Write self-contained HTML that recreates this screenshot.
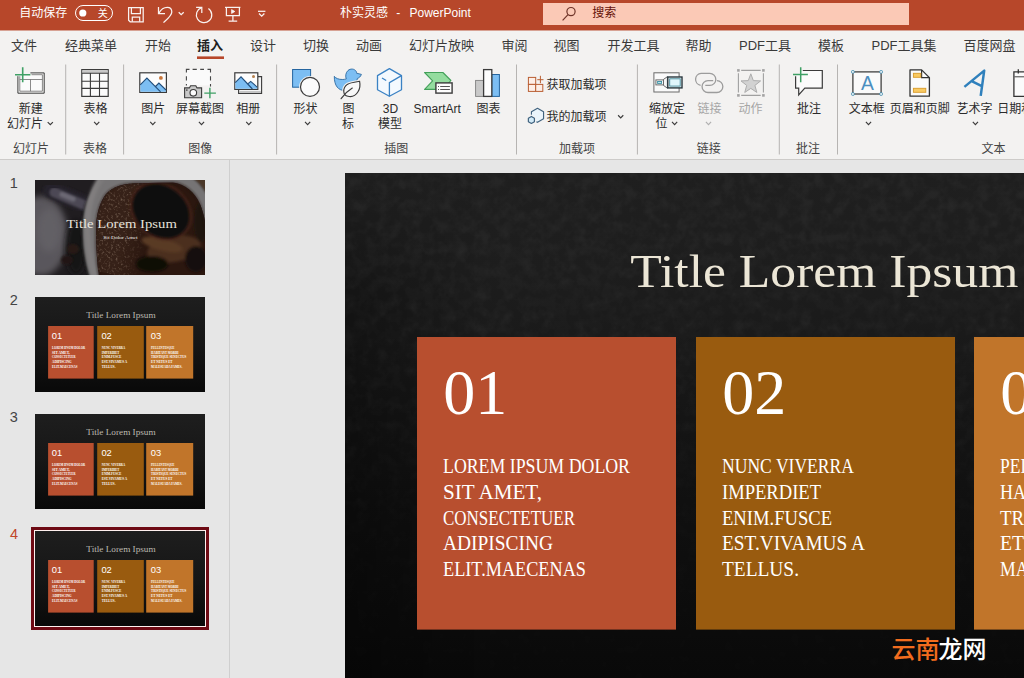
<!DOCTYPE html>
<html lang="zh-CN"><head><meta charset="utf-8"><title>PowerPoint</title>
<style>
html,body{margin:0;padding:0;background:#e6e6e6;font-family:"Liberation Sans",sans-serif;overflow:hidden}
#app{position:relative;width:1024px;height:678px;overflow:hidden;background:#e6e6e6}
#app>div{position:absolute;left:0;width:1024px;overflow:hidden}
#titlebar{top:0;height:30px;background:#b7472a}
#tabs{top:30px;height:30px;background:#f3f2f1;box-shadow:inset 0 1px 0 #d7a294}
#ribbon{top:60px;height:100px;background:#f3f2f1;box-shadow:inset 0 -1px 0 #cdcbc9}
#work{top:160px;height:518px;background:#e6e6e6}
#app svg{display:block;overflow:hidden}
#app svg text{font-family:"Liberation Sans","Noto Sans CJK SC",sans-serif}
#app svg text.sf{font-family:"Liberation Serif","Noto Serif CJK SC",serif}
#app svg text.sb{font-family:"Liberation Serif","Noto Serif CJK SC",serif;font-weight:bold}
</style></head><body>
<div id="app">
<div id="titlebar"><svg class="" style="position:absolute;left:0;top:0" width="1024" height="30" viewBox="0 0 1024 30"><text x="19.2" y="17.2" font-size="12" fill="#fff">自动保存</text><rect x="75.5" y="5.5" width="37" height="15" rx="7.5" fill="none" stroke="#fff" stroke-width="1"/><circle cx="82.8" cy="13" r="3.6" fill="#fff"/><text x="97.8" y="16.55" font-size="10" fill="#fff">关</text><g fill="none" stroke="#fff" stroke-width="1.25" opacity="0.93"><path d="M128.6 7.6 H143.2 V21.8 H130.2 L128.6 20.2 Z"/><path d="M131.4 7.6 V13.7 H140.4 V7.6"/><path d="M132.3 21.8 V17 H139.7 V21.8"/><path d="M158.5 7 V13.5 H165"/><path d="M158.9 13.1 C160.6 10 163.6 7.3 167.3 7.3 C170.2 7.3 171.8 9.4 171.8 12 C171.8 15.5 168 18.5 163.5 22.6"/><path d="M178.7 12.2 l2.5 2.5 l2.5 -2.5"/><path d="M196.1 7.3 H201.8 V12.9"/><path d="M201.5 7.7 A7.7 7.7 0 1 0 208.4 8.6"/><path d="M225 7.4 H240.4"/><path d="M226.4 7.4 V15.6 H239.4 V7.4"/><path d="M232.9 15.6 V21 M228.6 21.2 H237.2"/><path d="M231.6 9.6 V13.4 L234.8 11.5 Z" stroke-width="0.8" fill="#fff"/><path d="M258 11.3 H265.4"/><path d="M259 13.5 l2.7 2.7 l2.7 -2.7"/></g><text x="340" y="17.4" font-size="12" fill="#fff">朴实灵感</text><text x="396.3" y="17.4" font-size="12" fill="#fff">-</text><text x="409.5" y="17.4" font-size="12" fill="#fff">PowerPoint</text><rect x="543" y="3" width="366" height="22" fill="#fbc9b6"/><g fill="none" stroke="#6e3328" stroke-width="1.2"><circle cx="571" cy="11.6" r="4.1"/><path d="M568 14.7 L562.6 20.4"/></g><text x="592.2" y="17.3" font-size="12" fill="#651208">搜索</text></svg></div>
<div id="tabs"><svg class="" style="position:absolute;left:0;top:0" width="1024" height="30" viewBox="0 30 1024 30"><text x="11" y="50.08" font-size="13" fill="#3a3a3a">文件</text><text x="65" y="50.08" font-size="13" fill="#3a3a3a">经典菜单</text><text x="145" y="50.08" font-size="13" fill="#3a3a3a">开始</text><text x="197" y="50.08" font-size="13" font-weight="bold" fill="#1f1f1f">插入</text><rect x="197" y="56.4" width="27" height="2.6" fill="#b7472a"/><text x="250" y="50.08" font-size="13" fill="#3a3a3a">设计</text><text x="303" y="50.08" font-size="13" fill="#3a3a3a">切换</text><text x="356" y="50.08" font-size="13" fill="#3a3a3a">动画</text><text x="409" y="50.08" font-size="13" fill="#3a3a3a">幻灯片放映</text><text x="501.5" y="50.08" font-size="13" fill="#3a3a3a">审阅</text><text x="553.5" y="50.08" font-size="13" fill="#3a3a3a">视图</text><text x="607.5" y="50.08" font-size="13" fill="#3a3a3a">开发工具</text><text x="685.5" y="50.08" font-size="13" fill="#3a3a3a">帮助</text><text x="739" y="50.08" font-size="13" fill="#3a3a3a">PDF工具</text><text x="818" y="50.08" font-size="13" fill="#3a3a3a">模板</text><text x="871.5" y="50.08" font-size="13" fill="#3a3a3a">PDF工具集</text><text x="963.5" y="50.08" font-size="13" fill="#3a3a3a">百度网盘</text></svg></div>
<div id="ribbon"><svg class="" style="position:absolute;left:0;top:0" width="1024" height="100" viewBox="0 60 1024 100"><rect x="65.2" y="64.5" width="1" height="90" fill="#b6b4b2"/><rect x="123.1" y="64.5" width="1" height="90" fill="#b6b4b2"/><rect x="276.1" y="64.5" width="1" height="90" fill="#b6b4b2"/><rect x="516" y="64.5" width="1" height="90" fill="#b6b4b2"/><rect x="636.9" y="64.5" width="1" height="90" fill="#b6b4b2"/><rect x="778.8" y="64.5" width="1" height="90" fill="#b6b4b2"/><rect x="837" y="64.5" width="1" height="90" fill="#b6b4b2"/><text x="13" y="153.1" font-size="12" fill="#444">幻灯片</text><text x="83" y="153.1" font-size="12" fill="#444">表格</text><text x="188.3" y="153.1" font-size="12" fill="#444">图像</text><text x="384.2" y="153.1" font-size="12" fill="#444">插图</text><text x="559" y="153.1" font-size="12" fill="#444">加载项</text><text x="696.7" y="153.1" font-size="12" fill="#444">链接</text><text x="796" y="153.1" font-size="12" fill="#444">批注</text><text x="981.5" y="153.1" font-size="12" fill="#444">文本</text><text x="18.7" y="113.1" font-size="12" fill="#2b2b2b">新建</text><text x="7" y="128.1" font-size="12" fill="#2b2b2b">幻灯片</text><path d="M47.7 122.05 l2.6 2.7 l2.6 -2.7" fill="none" stroke="#3b3b3b" stroke-width="1.15"/><text x="83.6" y="113.1" font-size="12" fill="#2b2b2b">表格</text><path d="M94.1 121.85 l2.6 2.7 l2.6 -2.7" fill="none" stroke="#3b3b3b" stroke-width="1.15"/><text x="141.3" y="113.1" font-size="12" fill="#2b2b2b">图片</text><path d="M150.2 121.85 l2.6 2.7 l2.6 -2.7" fill="none" stroke="#3b3b3b" stroke-width="1.15"/><text x="176" y="113.1" font-size="12" fill="#2b2b2b">屏幕截图</text><path d="M198.9 121.85 l2.6 2.7 l2.6 -2.7" fill="none" stroke="#3b3b3b" stroke-width="1.15"/><text x="236.2" y="113.1" font-size="12" fill="#2b2b2b">相册</text><path d="M246.2 121.85 l2.6 2.7 l2.6 -2.7" fill="none" stroke="#3b3b3b" stroke-width="1.15"/><text x="293.5" y="113.1" font-size="12" fill="#2b2b2b">形状</text><path d="M305 121.85 l2.6 2.7 l2.6 -2.7" fill="none" stroke="#3b3b3b" stroke-width="1.15"/><text x="342.4" y="113.1" font-size="12" fill="#2b2b2b">图</text><text x="342" y="128.1" font-size="12" fill="#2b2b2b">标</text><text x="382.84" y="113.1" font-size="12" fill="#2b2b2b">3D</text><text x="378" y="128.1" font-size="12" fill="#2b2b2b">模型</text><text x="413.5" y="113.1" font-size="12" fill="#2b2b2b">SmartArt</text><text x="476.6" y="113.1" font-size="12" fill="#2b2b2b">图表</text><text x="546.6" y="89.2" font-size="12" fill="#2b2b2b">获取加载项</text><text x="546.6" y="121.3" font-size="12" fill="#2b2b2b">我的加载项</text><path d="M618.1 115.25 l2.6 2.7 l2.6 -2.7" fill="none" stroke="#3b3b3b" stroke-width="1.15"/><text x="649" y="113.1" font-size="12" fill="#2b2b2b">缩放定</text><text x="655.4" y="128.1" font-size="12" fill="#2b2b2b">位</text><path d="M672 121.85 l2.6 2.7 l2.6 -2.7" fill="none" stroke="#3b3b3b" stroke-width="1.15"/><text x="697.4" y="113.1" font-size="12" fill="#a6a6a6">链接</text><path d="M705.9 121.85 l2.6 2.7 l2.6 -2.7" fill="none" stroke="#b0b0b0" stroke-width="1.15"/><text x="738.5" y="113.1" font-size="12" fill="#a6a6a6">动作</text><text x="797" y="113.1" font-size="12" fill="#2b2b2b">批注</text><text x="848.8" y="113.1" font-size="12" fill="#2b2b2b">文本框</text><path d="M865.9 121.85 l2.6 2.7 l2.6 -2.7" fill="none" stroke="#3b3b3b" stroke-width="1.15"/><text x="889.7" y="113.1" font-size="12" fill="#2b2b2b">页眉和页脚</text><text x="956.6" y="113.1" font-size="12" fill="#2b2b2b">艺术字</text><path d="M972.8 121.85 l2.6 2.7 l2.6 -2.7" fill="none" stroke="#3b3b3b" stroke-width="1.15"/><text x="997.2" y="113.1" font-size="12" fill="#2b2b2b">日期和</text><rect x="19.7" y="74.6" width="22.7" height="16.6" fill="#fbfbfb"/><path d="M30.4 72.9 H44.2 V93.2 H17.9 V76.2" fill="none" stroke="#333" stroke-width="0.95"/><path d="M31.5 74.7 H42.4 V91.2 H19.8 V76.2 M19.8 79.5 H42.4 M30.5 79.5 V91.2" fill="none" stroke="#666" stroke-width="0.75"/><path d="M15 74.7 H30.4 M22.7 67.3 V82.3" stroke="#3fa065" stroke-width="1.6" fill="none"/><rect x="81.8" y="69.6" width="26.4" height="26.8" fill="#fbfbfb" stroke="#3b3b3b" stroke-width="1.2"/><rect x="82.4" y="70.2" width="25.2" height="3" fill="#c8c8c8"/><path d="M81.8 73.3 H108.2 M81.8 81.3 H108.2 M81.8 88.4 H108.2 M90.4 73.3 V96.4 M99.5 73.3 V96.4" stroke="#3b3b3b" stroke-width="1.1" fill="none"/><rect x="139.8" y="72.8" width="26.6" height="19.6" fill="#fdfdfd" stroke="#3b3b3b" stroke-width="1.2"/><path d="M140.4 84.6 L146.9 78 L155.5 86.5 L158.9 83 L165.8 89.8 V91.8 H140.4 Z" fill="#7cbef3"/><path d="M140.2 84.8 L146.9 78 L160.6 91.8 M155.5 86.5 L158.9 83 L166 90" fill="none" stroke="#234e7a" stroke-width="1.1"/><circle cx="160.9" cy="77.9" r="1.9" fill="#c8763a"/><rect x="186.4" y="69.4" width="24.2" height="16" fill="#fafafa"/><path d="M186.4 72.6 V69.4 H189.5 M192.6 69.4 H196.8 M200.2 69.4 H204 M207.5 69.4 H210.5 V72.6 M186.4 76.3 V80.5 M186.4 84.1 V85.6 M210.5 76.3 V80.5 M210.5 84.1 V86.6" fill="none" stroke="#474747" stroke-width="1.1"/><path d="M184.6 87.9 H189.4 L190.6 85.7 H195.8 L197 87.9 H201.6 V97.8 H184.6 Z" fill="#c8c8c8" stroke="#3b3b3b" stroke-width="1.1"/><circle cx="193.3" cy="92.8" r="3.3" fill="#fcfcfc" stroke="#3b3b3b" stroke-width="1.1"/><rect x="186.1" y="89.4" width="1.4" height="1.4" fill="#3b3b3b"/><path d="M204.3 93.1 H215.9 M209.9 87.7 V98.2" stroke="#3fa065" stroke-width="1.4" fill="none"/><path d="M258 76.6 H261.6 V93.4 H238.6 V90" fill="#f4f4f4" stroke="#3b3b3b" stroke-width="1.1"/><rect x="239.2" y="91" width="21.6" height="1.5" fill="#c4c4c4"/><rect x="234.8" y="72.8" width="23" height="16.6" fill="#fdfdfd" stroke="#3b3b3b" stroke-width="1.2"/><path d="M235.4 82.4 L241 76.8 L248.1 83.7 L250.7 81.4 L257.2 87.2 V88.8 H235.4 Z" fill="#7cbef3"/><path d="M235.2 82.6 L241 76.8 L252.4 89 M248.1 83.7 L250.7 81.4 L257.4 87.3" fill="none" stroke="#234e7a" stroke-width="1.1"/><circle cx="253.5" cy="76.5" r="1.5" fill="#b5804e"/><rect x="292.6" y="69.5" width="18" height="17.7" fill="#7cbef3" stroke="#25659f" stroke-width="1"/><circle cx="310" cy="86.9" r="10.9" fill="#f3f2f1"/><circle cx="310" cy="86.9" r="9.5" fill="#fbfbfb" stroke="#3b3b3b" stroke-width="1.2"/><path d="M334.3 76.3 C335.5 78.2 338.5 79.6 342.8 79.5 C344.2 79.4 345.4 79.2 346.3 78.9 C345.2 76.6 345.6 72.6 348 70.5 C350.6 68.3 354.6 68.6 356.3 71.6 C356.6 72.2 356.6 72.8 356.5 73.2 L361.4 74.4 C360.6 76.6 359 78 357.4 78.4 C356.6 83 353 90.6 345 90.6 C338.5 90.6 334.2 86 334.3 76.3 Z" fill="#7cbef3" stroke="#2d6aa0" stroke-width="0.9" stroke-linejoin="round"/><path d="M359.6 81.3 C355 82 350 82.6 347.3 84.4 C344.8 86.2 343.6 89 343.8 91.7 C344 94.2 345.6 95.8 347.9 96.3 C351.8 97.2 355.8 95.4 358 91.8 C359.8 88.8 360.4 85 359.6 81.3 Z" fill="#f3f2f1" stroke="#f3f2f1" stroke-width="3.2"/><path d="M341.1 98.7 C344 94.6 347.5 91 352.3 88.1" fill="none" stroke="#f3f2f1" stroke-width="3"/><path d="M359.6 81.3 C355 82 350 82.6 347.3 84.4 C344.8 86.2 343.6 89 343.8 91.7 C344 94.2 345.6 95.8 347.9 96.3 C351.8 97.2 355.8 95.4 358 91.8 C359.8 88.8 360.4 85 359.6 81.3 Z" fill="#f8f8f8" stroke="#3b3b3b" stroke-width="1.15"/><path d="M341.1 98.7 C344 94.6 347.5 91 352.3 88.1" fill="none" stroke="#3b3b3b" stroke-width="1.15" stroke-linecap="round"/><path d="M389.4 68.6 L401.5 75.6 V89.7 L389.4 96.3 L377.5 89.7 V75.6 Z" fill="#f4f9fe" stroke="#3b82c4" stroke-width="1.3" stroke-linejoin="round"/><path d="M401.5 75.6 L389.4 82.6 V96.3 M386.2 80.5 L382 78" fill="none" stroke="#3b82c4" stroke-width="1.3"/><path d="M424.6 72.5 H442.9 L450.9 80.5 L442.9 89.4 H424.6 L432.6 80.9 Z" fill="#94dc9f" stroke="#43a05a" stroke-width="1.1" stroke-linejoin="round"/><rect x="435.9" y="82.9" width="16.2" height="10.2" fill="#fdfdfd" stroke="#3b3b3b" stroke-width="1.4"/><path d="M440.2 86.5 H449.9 M440.2 89.5 H449.9" stroke="#555" stroke-width="1" fill="none"/><rect x="438" y="86" width="1" height="1" fill="#555"/><rect x="438" y="89" width="1" height="1" fill="#555"/><rect x="475.6" y="80.4" width="8" height="16" fill="#c9c9c9" stroke="#808080" stroke-width="0.9"/><rect x="491.8" y="74.5" width="7.6" height="21.9" fill="#7cbef3" stroke="#25659f" stroke-width="1"/><rect x="483.6" y="69.6" width="8.2" height="26.8" fill="#fdfdfd" stroke="#3b3b3b" stroke-width="1.3"/><g fill="#fdeee6" stroke="#b95e32" stroke-width="1"><rect x="528.4" y="77.4" width="7.3" height="7"/><rect x="528.4" y="84.4" width="7.3" height="7"/><rect x="535.7" y="84.4" width="7.1" height="7"/><path d="M537.3 79.7 H543.5 M540.4 75.8 V83.2" fill="none"/></g><polygon points="537.5,108.35 543.56,111.85 543.56,118.85 537.5,122.35 531.44,118.85 531.44,111.85" fill="#ebf5fb"/><path d="M531.44 114.85 L531.44 111.85 L537.5 108.35 L543.56 111.85 L543.56 118.85 L537.5 122.35 L536.4 121.7" fill="none" stroke="#41637f" stroke-width="1.15" stroke-linejoin="round"/><polygon points="531.4,116.45 534.43,118.2 534.43,121.7 531.4,123.45 528.37,121.7 528.37,118.2" fill="#f3f2f1" stroke="#f3f2f1" stroke-width="3"/><polygon points="531.4,116.45 534.43,118.2 534.43,121.7 531.4,123.45 528.37,121.7 528.37,118.2" fill="#d3ebf8" stroke="#41637f" stroke-width="1.2" stroke-linejoin="round"/><rect x="653.9" y="72.8" width="25.2" height="19.2" fill="#fafafa" stroke="#6a6a6a" stroke-width="1"/><path d="M663.5 79.4 L667.4 76.7 V88.2 L663.5 85.4 Z" fill="#f7f7f7" stroke="#6a6a6a" stroke-width="1"/><rect x="655.9" y="79.9" width="7.6" height="5" fill="#fdfdfd" stroke="#6a6a6a" stroke-width="1"/><rect x="657.6" y="81.5" width="4" height="1.9" fill="#c4e8f0" stroke="#3b8ea0" stroke-width="0.9"/><rect x="667.8" y="77" width="14.2" height="10.9" fill="#fdfdfd" stroke="#26363d" stroke-width="1.4"/><rect x="669.7" y="78.8" width="10.5" height="7.3" fill="#e0f6fb" stroke="#3f8798" stroke-width="0.9"/><g fill="none" stroke="#9c9c9c" stroke-width="1.3"><path d="M700.6 85.3 A6 6 0 0 1 701.1 73.4 H709.8 A6 6 0 0 1 709.8 85.4 H705.3"/><path d="M713.2 80.6 H708 A5.95 5.95 0 0 0 708 92.5 H716.9 A5.95 5.95 0 0 0 716.9 80.6"/></g><path d="M741.2 70.4 H760.7 M741.2 95.4 H760.7 M738.4 73.3 V92.5 M763.4 73.3 V92.5" fill="none" stroke="#a0a0a0" stroke-width="1.1"/><rect x="737.1" y="69.1" width="2.6" height="2.6" fill="#a3a3a3"/><rect x="762.1" y="69.1" width="2.6" height="2.6" fill="#a3a3a3"/><rect x="737.1" y="94.1" width="2.6" height="2.6" fill="#a3a3a3"/><rect x="762.1" y="94.1" width="2.6" height="2.6" fill="#a3a3a3"/><polygon points="750.8,73.8 753.33,80.62 760.6,80.92 754.89,85.43 756.85,92.43 750.8,88.4 744.75,92.43 746.71,85.43 741,80.92 748.27,80.62" fill="#d2d2d2" stroke="#adadad" stroke-width="1" stroke-linejoin="round"/><path d="M802.8 70.5 H822.3 V88.2 H804.8 L798.7 94.9 V88.2 H795.6 V76.2" fill="#fbfbfb" stroke="#3b3b3b" stroke-width="1.2"/><path d="M793 74.6 H807.9 M800.7 67.3 V82.2" stroke="#3fa065" stroke-width="1.5" fill="none"/><rect x="852.9" y="71.9" width="28.2" height="22.1" fill="#fafafa" stroke="#333" stroke-width="1.2"/><rect x="851.6" y="70.6" width="2.6" height="2.6" rx="0.7" fill="#fff" stroke="#3b87aa" stroke-width="0.9"/><rect x="879.8" y="70.6" width="2.6" height="2.6" rx="0.7" fill="#fff" stroke="#3b87aa" stroke-width="0.9"/><rect x="851.6" y="92.7" width="2.6" height="2.6" rx="0.7" fill="#fff" stroke="#3b87aa" stroke-width="0.9"/><rect x="879.8" y="92.7" width="2.6" height="2.6" rx="0.7" fill="#fff" stroke="#3b87aa" stroke-width="0.9"/><text x="860.89" y="89.8" font-size="19.3" fill="#4b8fc0">A</text><path d="M910 69.9 H921.6 L929.4 77.6 V96.2 H910 Z" fill="#fbfbfb" stroke="#333" stroke-width="1.3" stroke-linejoin="round"/><path d="M921.6 69.9 V77.6 H929.4" fill="none" stroke="#333" stroke-width="1.2"/><rect x="913.4" y="73.3" width="7.4" height="4" fill="#f9ca62" stroke="#d99b2a" stroke-width="0.9"/><rect x="913.4" y="88.3" width="12.4" height="4" fill="#f9ca62" stroke="#d99b2a" stroke-width="0.9"/><path d="M964.4 86.9 L984.2 70.6 L980.7 95.9 M971.7 81.2 L981.8 86.2" fill="none" stroke="#2f80bc" stroke-width="2.5" stroke-linejoin="round"/><path d="M1030 71.8 H1013.9 V96.3 H1030" fill="#fbfbfb" stroke="#333" stroke-width="1.3"/><path d="M1018.3 69.2 V73.6" stroke="#333" stroke-width="1.3"/><path d="M1014.4 76.8 H1030" stroke="#444" stroke-width="1"/></svg></div>
<div id="work"><svg class="" style="position:absolute;left:0;top:0" width="1024" height="518" viewBox="0 160 1024 518"><g id="thumbs"><defs><linearGradient id="tbg" x1="0" y1="0" x2="0" y2="1"><stop offset="0" stop-color="#1e1e1e"/><stop offset="0.5" stop-color="#161616"/><stop offset="1" stop-color="#090909"/></linearGradient></defs><text x="9.8" y="188.04" font-size="14.5" fill="#444">1</text><text x="9.8" y="304.94" font-size="14.5" fill="#444">2</text><text x="9.8" y="421.94" font-size="14.5" fill="#444">3</text><text x="9.9" y="538.74" font-size="14.5" fill="#c0452a">4</text><defs><clipPath id="cclip"><rect x="0" y="0" width="170" height="95"/></clipPath><clipPath id="cupclip"><path d="M61 50 C61 38 63 27 69 17 C74 8.5 84 4 100 3.2 L138 2.6 C150 4 160 12 165 24 C169 34 171 44 171.5 56 L172 100 L64.5 100 C62 85 61 65 61 50 Z"/></clipPath><filter id="b3" x="-30%" y="-30%" width="160%" height="160%"><feGaussianBlur stdDeviation="3"/></filter><filter id="b2" x="-30%" y="-30%" width="160%" height="160%"><feGaussianBlur stdDeviation="1.8"/></filter><filter id="b1" x="-30%" y="-30%" width="160%" height="160%"><feGaussianBlur stdDeviation="0.8"/></filter><filter id="foam" x="0" y="0" width="100%" height="100%"><feTurbulence type="fractalNoise" baseFrequency="0.42" numOctaves="2" seed="3"/><feColorMatrix type="matrix" values="0 0 0 0 0.47  0 0 0 0 0.33  0 0 0 0 0.24  1.7 0 0 0 -0.9"/><feGaussianBlur stdDeviation="0.35"/></filter><linearGradient id="foamfade" x1="0" y1="0" x2="1" y2="0"><stop offset="0" stop-color="#fff"/><stop offset="0.55" stop-color="#fff"/><stop offset="0.95" stop-color="#000"/></linearGradient><mask id="foammask"><rect x="55" y="0" width="62" height="95" fill="url(#foamfade)" transform="rotate(12 86 48)"/></mask></defs><g transform="translate(35 180)" clip-path="url(#cclip)"><rect width="170" height="95" fill="#242024"/><ellipse cx="6" cy="56" rx="27" ry="40" fill="#6e6a71" filter="url(#b3)"/><ellipse cx="14" cy="50" rx="12" ry="22" fill="#79767d" filter="url(#b3)"/><ellipse cx="41" cy="68" rx="10" ry="27" fill="#171214" filter="url(#b3)"/><ellipse cx="38" cy="69" rx="6" ry="5" fill="#2e1c16" filter="url(#b1)"/><ellipse cx="32" cy="80" rx="6" ry="4.5" fill="#281813" filter="url(#b1)"/><path d="M17 10.5 L54 26" stroke="#2a2630" stroke-width="17" stroke-linecap="round" fill="none" filter="url(#b2)"/><g filter="url(#b1)"><path d="M19.5 12.5 L54 27" stroke="#5d5967" stroke-width="10" stroke-linecap="round" fill="none"/><path d="M27 14.5 L38 19" stroke="#858190" stroke-width="5" stroke-linecap="round" fill="none"/></g><rect x="150" y="0" width="20" height="16" fill="#5c4330"/><path d="M47.8 50 C47.8 36 51 22 57 12 C61 5 66 -2 72 -6 L150 -6 C160 -2 166 5 173 16 L173 100 L56 100 C50.5 85 47.8 68 47.8 50 Z" fill="#191517" filter="url(#b2)" transform="translate(-1.2 0)"/><path d="M47.8 50 C47.8 36 51 22 57 12 C61 5 66 -2 72 -6 L150 -6 C160 -2 166 5 173 16 L173 100 L56 100 C50.5 85 47.8 68 47.8 50 Z" fill="#939091" filter="url(#b1)"/><path d="M66 -2 C56 12 52 32 52.5 52 C53 70 56 84 60 98" fill="none" stroke="#a09d9e" stroke-width="6" filter="url(#b2)"/><g clip-path="url(#cupclip)"><rect x="55" y="0" width="120" height="100" fill="#33190f"/><g mask="url(#foammask)"><rect x="50" y="-10" width="80" height="115" fill="#41261a"/><rect x="50" y="-10" width="80" height="115" filter="url(#foam)"/></g><g filter="url(#b2)"><ellipse cx="139" cy="69" rx="27" ry="13" fill="#5c3822" transform="rotate(-10 139 69)"/><ellipse cx="127" cy="64.5" rx="21" ry="6" fill="#6e462a" transform="rotate(14 127 64.5)"/><ellipse cx="161" cy="79" rx="11" ry="13" fill="#170d09"/><ellipse cx="166" cy="42" rx="7" ry="20" fill="#22120c"/><ellipse cx="117" cy="84" rx="16" ry="8" fill="#0f0806"/><ellipse cx="126" cy="31" rx="33" ry="27" fill="#53281a" transform="rotate(38 126 31)"/></g><ellipse cx="126" cy="31" rx="30.5" ry="24.5" fill="#0d0807" transform="rotate(38 126 31)" filter="url(#b1)"/></g><path d="M61 50 C61 38 63 27 69 17 C74 8.5 84 4 100 3.2 L138 2.6 C150 4 160 12 165 24 C169 34 171 44 171.5 56 L172 100 L64.5 100 C62 85 61 65 61 50 Z" fill="none" stroke="#2a1a14" stroke-width="1.6" opacity="0.7" filter="url(#b1)"/><rect width="170" height="95" fill="#141014" opacity="0.22"/></g><text class="sf" x="66.35" y="228.3" font-size="13" fill="#e6e2da" textLength="110.5" lengthAdjust="spacingAndGlyphs">Title Lorem Ipsum</text><text class="sf" x="103.25" y="239.4" font-size="4.9" fill="#f2f0ec" textLength="34.3" lengthAdjust="spacingAndGlyphs">Sit Dolor Amet</text><rect x="35" y="297" width="170" height="95" fill="url(#tbg)"/><text class="sf" x="86.36" y="318.36" font-size="8.15" fill="#bbb9b0" textLength="69.28" lengthAdjust="spacingAndGlyphs">Title Lorem Ipsum</text><rect x="48.1" y="326" width="45.6" height="52.6" fill="#b84f2f"/><text x="51.7" y="338.7" font-size="9.4" fill="#fff">01</text><rect x="97.2" y="326" width="46.6" height="52.6" fill="#995b0f"/><text x="101.4" y="338.7" font-size="9.4" fill="#fff">02</text><rect x="146.2" y="326" width="47" height="52.6" fill="#c1752a"/><text x="150.7" y="338.7" font-size="9.4" fill="#fff">03</text><text class="sb" x="52.1" y="348.96" font-size="3.9" fill="#fff" textLength="33.15" lengthAdjust="spacingAndGlyphs">LOREM IPSUM DOLOR</text><text class="sb" x="52.1" y="353.71" font-size="3.9" fill="#fff" textLength="17.55" lengthAdjust="spacingAndGlyphs">SIT AMET,</text><text class="sb" x="52.1" y="358.46" font-size="3.9" fill="#fff" textLength="23.4" lengthAdjust="spacingAndGlyphs">CONSECTETUER</text><text class="sb" x="52.1" y="363.21" font-size="3.9" fill="#fff" textLength="19.5" lengthAdjust="spacingAndGlyphs">ADIPISCING</text><text class="sb" x="52.1" y="367.96" font-size="3.9" fill="#fff" textLength="25.35" lengthAdjust="spacingAndGlyphs">ELIT.MAECENAS</text><text class="sb" x="101.8" y="348.96" font-size="3.9" fill="#fff" textLength="23.4" lengthAdjust="spacingAndGlyphs">NUNC VIVERRA</text><text class="sb" x="101.8" y="353.71" font-size="3.9" fill="#fff" textLength="17.55" lengthAdjust="spacingAndGlyphs">IMPERDIET</text><text class="sb" x="101.8" y="358.46" font-size="3.9" fill="#fff" textLength="19.5" lengthAdjust="spacingAndGlyphs">ENIM.FUSCE</text><text class="sb" x="101.8" y="363.21" font-size="3.9" fill="#fff" textLength="25.35" lengthAdjust="spacingAndGlyphs">EST.VIVAMUS A</text><text class="sb" x="101.8" y="367.96" font-size="3.9" fill="#fff" textLength="13.65" lengthAdjust="spacingAndGlyphs">TELLUS.</text><text class="sb" x="151.1" y="348.96" font-size="3.9" fill="#fff" textLength="23.4" lengthAdjust="spacingAndGlyphs">PELLENTESQUE</text><text class="sb" x="151.1" y="353.71" font-size="3.9" fill="#fff" textLength="27.3" lengthAdjust="spacingAndGlyphs">HABITANT MORBI</text><text class="sb" x="151.1" y="358.46" font-size="3.9" fill="#fff" textLength="35.1" lengthAdjust="spacingAndGlyphs">TRISTIQUE SENECTUS</text><text class="sb" x="151.1" y="363.21" font-size="3.9" fill="#fff" textLength="21.45" lengthAdjust="spacingAndGlyphs">ET NETUS ET</text><text class="sb" x="151.1" y="367.96" font-size="3.9" fill="#fff" textLength="31.2" lengthAdjust="spacingAndGlyphs">MALESUADA FAMES.</text><rect x="35" y="414" width="170" height="95" fill="url(#tbg)"/><text class="sf" x="86.36" y="435.36" font-size="8.15" fill="#bbb9b0" textLength="69.28" lengthAdjust="spacingAndGlyphs">Title Lorem Ipsum</text><rect x="48.1" y="443" width="45.6" height="52.6" fill="#b84f2f"/><text x="51.7" y="455.7" font-size="9.4" fill="#fff">01</text><rect x="97.2" y="443" width="46.6" height="52.6" fill="#995b0f"/><text x="101.4" y="455.7" font-size="9.4" fill="#fff">02</text><rect x="146.2" y="443" width="47" height="52.6" fill="#c1752a"/><text x="150.7" y="455.7" font-size="9.4" fill="#fff">03</text><text class="sb" x="52.1" y="465.96" font-size="3.9" fill="#fff" textLength="33.15" lengthAdjust="spacingAndGlyphs">LOREM IPSUM DOLOR</text><text class="sb" x="52.1" y="470.71" font-size="3.9" fill="#fff" textLength="17.55" lengthAdjust="spacingAndGlyphs">SIT AMET,</text><text class="sb" x="52.1" y="475.46" font-size="3.9" fill="#fff" textLength="23.4" lengthAdjust="spacingAndGlyphs">CONSECTETUER</text><text class="sb" x="52.1" y="480.21" font-size="3.9" fill="#fff" textLength="19.5" lengthAdjust="spacingAndGlyphs">ADIPISCING</text><text class="sb" x="52.1" y="484.96" font-size="3.9" fill="#fff" textLength="25.35" lengthAdjust="spacingAndGlyphs">ELIT.MAECENAS</text><text class="sb" x="101.8" y="465.96" font-size="3.9" fill="#fff" textLength="23.4" lengthAdjust="spacingAndGlyphs">NUNC VIVERRA</text><text class="sb" x="101.8" y="470.71" font-size="3.9" fill="#fff" textLength="17.55" lengthAdjust="spacingAndGlyphs">IMPERDIET</text><text class="sb" x="101.8" y="475.46" font-size="3.9" fill="#fff" textLength="19.5" lengthAdjust="spacingAndGlyphs">ENIM.FUSCE</text><text class="sb" x="101.8" y="480.21" font-size="3.9" fill="#fff" textLength="25.35" lengthAdjust="spacingAndGlyphs">EST.VIVAMUS A</text><text class="sb" x="101.8" y="484.96" font-size="3.9" fill="#fff" textLength="13.65" lengthAdjust="spacingAndGlyphs">TELLUS.</text><text class="sb" x="151.1" y="465.96" font-size="3.9" fill="#fff" textLength="23.4" lengthAdjust="spacingAndGlyphs">PELLENTESQUE</text><text class="sb" x="151.1" y="470.71" font-size="3.9" fill="#fff" textLength="27.3" lengthAdjust="spacingAndGlyphs">HABITANT MORBI</text><text class="sb" x="151.1" y="475.46" font-size="3.9" fill="#fff" textLength="35.1" lengthAdjust="spacingAndGlyphs">TRISTIQUE SENECTUS</text><text class="sb" x="151.1" y="480.21" font-size="3.9" fill="#fff" textLength="21.45" lengthAdjust="spacingAndGlyphs">ET NETUS ET</text><text class="sb" x="151.1" y="484.96" font-size="3.9" fill="#fff" textLength="31.2" lengthAdjust="spacingAndGlyphs">MALESUADA FAMES.</text><rect x="32.5" y="528.5" width="175" height="100" fill="#fff0ee" stroke="#6e0a14" stroke-width="3"/><rect x="35" y="531" width="170" height="95" fill="url(#tbg)"/><text class="sf" x="86.36" y="552.36" font-size="8.15" fill="#bbb9b0" textLength="69.28" lengthAdjust="spacingAndGlyphs">Title Lorem Ipsum</text><rect x="48.1" y="560" width="45.6" height="52.6" fill="#b84f2f"/><text x="51.7" y="572.7" font-size="9.4" fill="#fff">01</text><rect x="97.2" y="560" width="46.6" height="52.6" fill="#995b0f"/><text x="101.4" y="572.7" font-size="9.4" fill="#fff">02</text><rect x="146.2" y="560" width="47" height="52.6" fill="#c1752a"/><text x="150.7" y="572.7" font-size="9.4" fill="#fff">03</text><text class="sb" x="52.1" y="582.96" font-size="3.9" fill="#fff" textLength="33.15" lengthAdjust="spacingAndGlyphs">LOREM IPSUM DOLOR</text><text class="sb" x="52.1" y="587.71" font-size="3.9" fill="#fff" textLength="17.55" lengthAdjust="spacingAndGlyphs">SIT AMET,</text><text class="sb" x="52.1" y="592.46" font-size="3.9" fill="#fff" textLength="23.4" lengthAdjust="spacingAndGlyphs">CONSECTETUER</text><text class="sb" x="52.1" y="597.21" font-size="3.9" fill="#fff" textLength="19.5" lengthAdjust="spacingAndGlyphs">ADIPISCING</text><text class="sb" x="52.1" y="601.96" font-size="3.9" fill="#fff" textLength="25.35" lengthAdjust="spacingAndGlyphs">ELIT.MAECENAS</text><text class="sb" x="101.8" y="582.96" font-size="3.9" fill="#fff" textLength="23.4" lengthAdjust="spacingAndGlyphs">NUNC VIVERRA</text><text class="sb" x="101.8" y="587.71" font-size="3.9" fill="#fff" textLength="17.55" lengthAdjust="spacingAndGlyphs">IMPERDIET</text><text class="sb" x="101.8" y="592.46" font-size="3.9" fill="#fff" textLength="19.5" lengthAdjust="spacingAndGlyphs">ENIM.FUSCE</text><text class="sb" x="101.8" y="597.21" font-size="3.9" fill="#fff" textLength="25.35" lengthAdjust="spacingAndGlyphs">EST.VIVAMUS A</text><text class="sb" x="101.8" y="601.96" font-size="3.9" fill="#fff" textLength="13.65" lengthAdjust="spacingAndGlyphs">TELLUS.</text><text class="sb" x="151.1" y="582.96" font-size="3.9" fill="#fff" textLength="23.4" lengthAdjust="spacingAndGlyphs">PELLENTESQUE</text><text class="sb" x="151.1" y="587.71" font-size="3.9" fill="#fff" textLength="27.3" lengthAdjust="spacingAndGlyphs">HABITANT MORBI</text><text class="sb" x="151.1" y="592.46" font-size="3.9" fill="#fff" textLength="35.1" lengthAdjust="spacingAndGlyphs">TRISTIQUE SENECTUS</text><text class="sb" x="151.1" y="597.21" font-size="3.9" fill="#fff" textLength="21.45" lengthAdjust="spacingAndGlyphs">ET NETUS ET</text><text class="sb" x="151.1" y="601.96" font-size="3.9" fill="#fff" textLength="31.2" lengthAdjust="spacingAndGlyphs">MALESUADA FAMES.</text><rect x="229" y="160" width="1" height="518" fill="#cfcfcf"/></g><g id="slide"><defs><filter id="noise" x="0" y="0" width="100%" height="100%"><feTurbulence type="fractalNoise" baseFrequency="0.09" numOctaves="3" seed="7"/><feColorMatrix type="matrix" values="0 0 0 0 1  0 0 0 0 1  0 0 0 0 1  0.045 0.045 0.045 0 -0.055"/></filter><linearGradient id="sbg" x1="0" y1="0" x2="0" y2="1"><stop offset="0" stop-color="#1f1f1f"/><stop offset="0.2" stop-color="#1d1d1d"/><stop offset="0.32" stop-color="#1a1a1a"/><stop offset="0.45" stop-color="#161616"/><stop offset="0.65" stop-color="#101010"/><stop offset="0.865" stop-color="#0c0c0c"/><stop offset="1" stop-color="#090909"/></linearGradient><linearGradient id="svig" x1="0" y1="0" x2="1" y2="0"><stop offset="0" stop-color="#000" stop-opacity="0.28"/><stop offset="1" stop-color="#000" stop-opacity="0"/></linearGradient><linearGradient id="svig2" x1="0" y1="0" x2="0" y2="1"><stop offset="0" stop-color="#fff" stop-opacity="0"/><stop offset="0.25" stop-color="#fff" stop-opacity="1"/></linearGradient><linearGradient id="nmg" x1="0" y1="0" x2="0" y2="1"><stop offset="0" stop-color="#fff"/><stop offset="0.3" stop-color="#ddd"/><stop offset="0.75" stop-color="#555"/><stop offset="1" stop-color="#333"/></linearGradient><mask id="nm"><rect x="345" y="173" width="679" height="505" fill="url(#nmg)"/></mask><mask id="svm"><rect x="345" y="173" width="140" height="505" fill="url(#svig2)"/></mask></defs><rect x="345" y="173" width="679" height="505" fill="url(#sbg)"/><rect x="345" y="173" width="130" height="505" fill="url(#svig)" mask="url(#svm)"/><g mask="url(#nm)"><rect x="345" y="173" width="679" height="505" filter="url(#noise)"/></g><text class="sf" x="630.3" y="286.6" font-size="45.65" fill="#ece6d6" textLength="388.03" lengthAdjust="spacingAndGlyphs">Title Lorem Ipsum</text><rect x="417" y="337" width="259" height="292.6" fill="#b84f2f"/><text class="sf" x="443.3" y="414.2" font-size="64" fill="#fff" textLength="64" lengthAdjust="spacingAndGlyphs">01</text><text class="sf" x="443" y="473" font-size="22" fill="#fff" textLength="187" lengthAdjust="spacingAndGlyphs">LOREM IPSUM DOLOR</text><text class="sf" x="443" y="498.78" font-size="22" fill="#fff" textLength="99" lengthAdjust="spacingAndGlyphs">SIT AMET,</text><text class="sf" x="443" y="524.56" font-size="22" fill="#fff" textLength="132" lengthAdjust="spacingAndGlyphs">CONSECTETUER</text><text class="sf" x="443" y="550.34" font-size="22" fill="#fff" textLength="110" lengthAdjust="spacingAndGlyphs">ADIPISCING</text><text class="sf" x="443" y="576.12" font-size="22" fill="#fff" textLength="143" lengthAdjust="spacingAndGlyphs">ELIT.MAECENAS</text><rect x="696" y="337" width="259" height="292.6" fill="#995b0f"/><text class="sf" x="722.3" y="414.2" font-size="64" fill="#fff" textLength="64" lengthAdjust="spacingAndGlyphs">02</text><text class="sf" x="722" y="473" font-size="22" fill="#fff" textLength="132" lengthAdjust="spacingAndGlyphs">NUNC VIVERRA</text><text class="sf" x="722" y="498.78" font-size="22" fill="#fff" textLength="99" lengthAdjust="spacingAndGlyphs">IMPERDIET</text><text class="sf" x="722" y="524.56" font-size="22" fill="#fff" textLength="110" lengthAdjust="spacingAndGlyphs">ENIM.FUSCE</text><text class="sf" x="722" y="550.34" font-size="22" fill="#fff" textLength="143" lengthAdjust="spacingAndGlyphs">EST.VIVAMUS A</text><text class="sf" x="722" y="576.12" font-size="22" fill="#fff" textLength="77" lengthAdjust="spacingAndGlyphs">TELLUS.</text><rect x="974" y="337" width="259" height="292.6" fill="#c1752a"/><text class="sf" x="1000.3" y="414.2" font-size="64" fill="#fff" textLength="64" lengthAdjust="spacingAndGlyphs">03</text><text class="sf" x="1000" y="473" font-size="22" fill="#fff" textLength="132" lengthAdjust="spacingAndGlyphs">PELLENTESQUE</text><text class="sf" x="1000" y="498.78" font-size="22" fill="#fff" textLength="154" lengthAdjust="spacingAndGlyphs">HABITANT MORBI</text><text class="sf" x="1000" y="524.56" font-size="22" fill="#fff" textLength="198" lengthAdjust="spacingAndGlyphs">TRISTIQUE SENECTUS</text><text class="sf" x="1000" y="550.34" font-size="22" fill="#fff" textLength="121" lengthAdjust="spacingAndGlyphs">ET NETUS ET</text><text class="sf" x="1000" y="576.12" font-size="22" fill="#fff" textLength="176" lengthAdjust="spacingAndGlyphs">MALESUADA FAMES.</text><text x="891.4" y="657.8" font-size="24" font-weight="500" fill="#f26c1e">云南</text><text x="938.6" y="657.8" font-size="24" font-weight="500" fill="#fff">龙网</text></g></svg></div>
</div>
</body></html>
